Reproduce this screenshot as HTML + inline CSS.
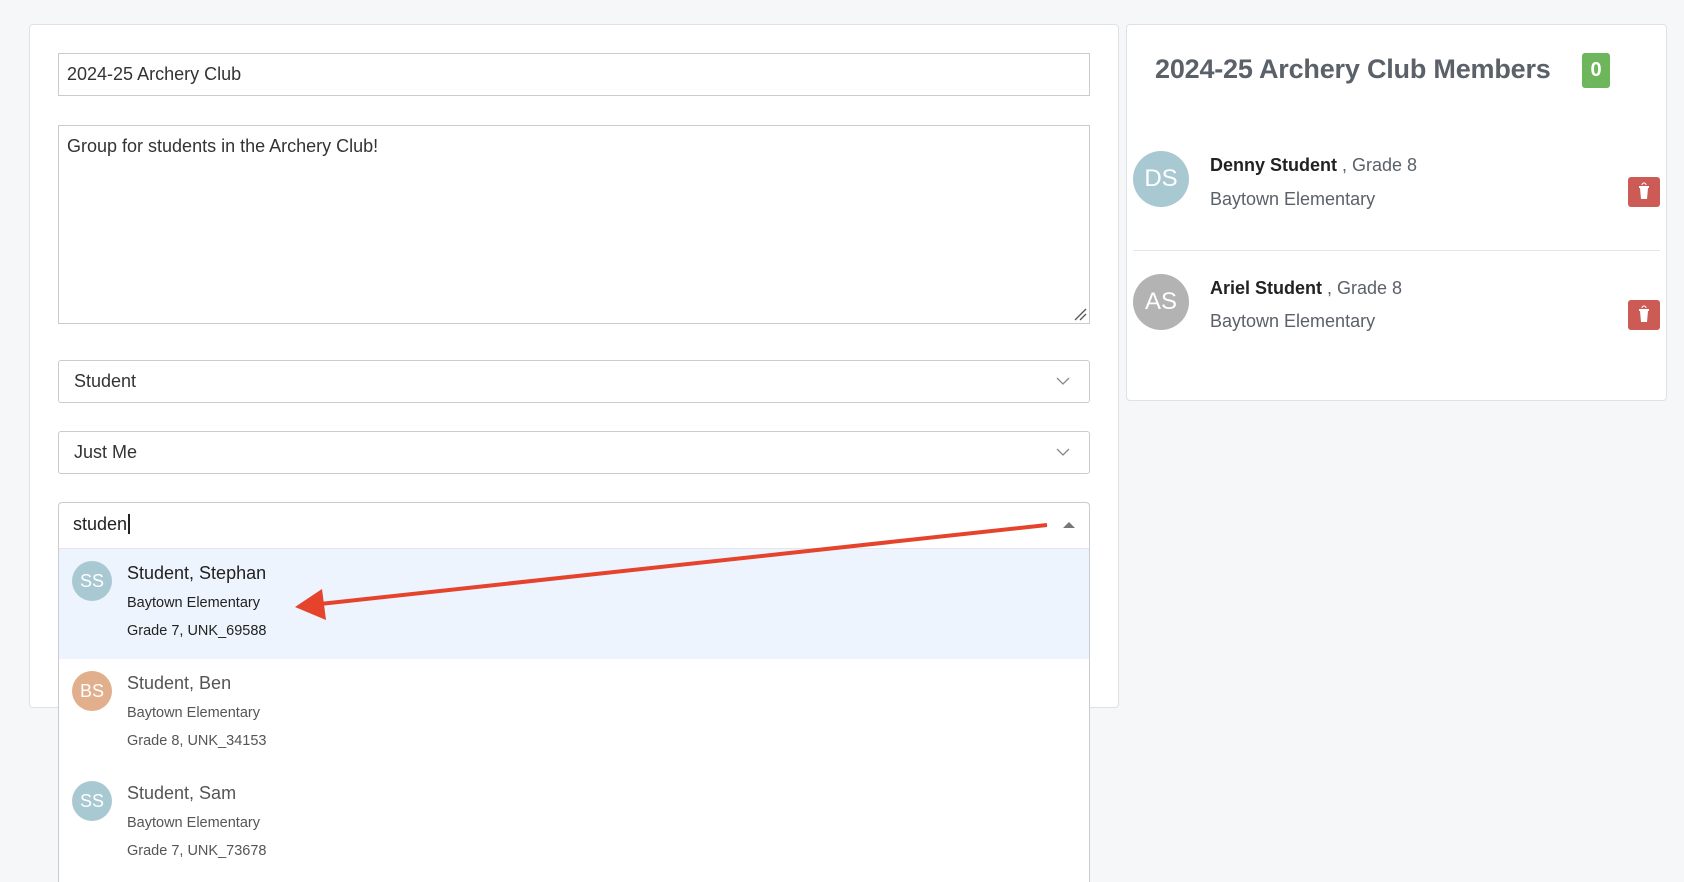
<!DOCTYPE html>
<html style="height:882px;overflow:hidden"><head><style>
body{margin:0;width:1684px;height:882px;background:#f6f7f9;font-family:"Liberation Sans",sans-serif;position:relative;overflow:hidden;color:#333}
.a{position:absolute;box-sizing:border-box}
.card{background:#fff;border:1px solid #dfe1e5;border-radius:4px}
.inp{border:1px solid #c8cbd0;background:#fff;font-size:18px;color:#333}
.av{border-radius:50%;color:#fff;display:flex;align-items:center;justify-content:center}
.chev{position:absolute;right:18px;top:12px}
</style></head><body>
<div class="a card" style="left:29px;top:24px;width:1090px;height:684px"></div>
<div class="a inp" style="left:58px;top:53px;width:1032px;height:43px;padding:10px 8px">2024-25 Archery Club</div>
<div class="a inp" style="left:58px;top:125px;width:1032px;height:199px;padding:10px 8px">Group for students in the Archery Club!
<svg style="position:absolute;right:2px;bottom:2px" width="14" height="14"><path d="M2 13L13 2M7 13L13 7" stroke="#555" stroke-width="1.3"/></svg></div>
<div class="a inp" style="left:58px;top:360px;width:1032px;height:43px;padding:10px 15px;border-radius:3px">Student<svg class="chev" width="16" height="16"><path d="M2 5l6 6 6-6" stroke="#888" fill="none" stroke-width="1.3"/></svg></div>
<div class="a inp" style="left:58px;top:431px;width:1032px;height:43px;padding:10px 15px;border-radius:3px">Just Me<svg class="chev" width="16" height="16"><path d="M2 5l6 6 6-6" stroke="#888" fill="none" stroke-width="1.3"/></svg></div>
<div class="a" style="left:58px;top:502px;width:1032px;height:380px;border:1px solid #c8cbd0;border-bottom:none;border-radius:4px 4px 0 0;background:#fff;overflow:hidden">
 <div style="height:46px;border-bottom:1px solid #e3e6ea;font-size:18px;padding:11px 14px;box-sizing:border-box;position:relative;color:#222">studen<span style="border-left:2px solid #222;margin-left:1px"></span>
 <svg style="position:absolute;right:14px;top:18px" width="12" height="8"><path d="M0 7L6 1L12 7Z" fill="#777"/></svg></div>
 <div style="height:110px;background:#edf4fd;position:relative">
  <div class="a av" style="left:13px;top:12px;width:40px;height:40px;background:#a9c9d2;font-size:18px">SS</div>
  <div class="a" style="left:68px;top:14px;font-size:18px;color:#222">Student, Stephan</div>
  <div class="a" style="left:68px;top:46px;font-size:14.5px;color:#222">Baytown Elementary</div>
  <div class="a" style="left:68px;top:74px;font-size:14.5px;color:#222">Grade 7, UNK_69588</div>
 </div>
 <div style="height:110px;position:relative">
  <div class="a av" style="left:13px;top:12px;width:40px;height:40px;background:#e1af8c;font-size:18px">BS</div>
  <div class="a" style="left:68px;top:14px;font-size:18px;color:#555">Student, Ben</div>
  <div class="a" style="left:68px;top:46px;font-size:14.5px;color:#555">Baytown Elementary</div>
  <div class="a" style="left:68px;top:74px;font-size:14.5px;color:#555">Grade 8, UNK_34153</div>
 </div>
 <div style="height:110px;position:relative">
  <div class="a av" style="left:13px;top:12px;width:40px;height:40px;background:#a9c9d2;font-size:18px">SS</div>
  <div class="a" style="left:68px;top:14px;font-size:18px;color:#555">Student, Sam</div>
  <div class="a" style="left:68px;top:46px;font-size:14.5px;color:#555">Baytown Elementary</div>
  <div class="a" style="left:68px;top:74px;font-size:14.5px;color:#555">Grade 7, UNK_73678</div>
 </div>
</div>
<svg class="a" style="left:0;top:0" width="1684" height="882"><line x1="1047" y1="525" x2="320" y2="604" stroke="#e5432b" stroke-width="4"/><path d="M295 607L322 589L326 620Z" fill="#e5432b"/></svg>
<div class="a card" style="left:1126px;top:24px;width:541px;height:377px"></div>
<div class="a" style="left:1155px;top:54px;font-size:27px;font-weight:bold;color:#5b6168;letter-spacing:-0.2px">2024-25 Archery Club Members</div>
<div class="a" style="left:1582px;top:53px;width:28px;height:35px;background:#6db65b;border-radius:3px;color:#fff;font-weight:bold;font-size:20px;text-align:center;line-height:35px">0</div>
<div class="a av" style="left:1133px;top:151px;width:56px;height:56px;background:#a9c9d2;font-size:24px">DS</div>
<div class="a" style="left:1210px;top:155px;font-size:18px"><b style="color:#222">Denny Student</b><span style="color:#5b6168"> , Grade 8</span></div>
<div class="a" style="left:1210px;top:189px;font-size:18px;color:#5b6168">Baytown Elementary</div>
<div class="a" style="left:1628px;top:177px;width:32px;height:30px;background:#cc5b55;border-radius:3px"><svg width="32" height="30"><path d="M12 11h8l-1 11h-6z" fill="#fff"/><rect x="11" y="9" width="10" height="2" fill="#fff"/><path d="M14 8a2 2 0 0 1 4 0" stroke="#fff" fill="none"/></svg></div>
<div class="a" style="left:1133px;top:250px;width:527px;height:1px;background:#e3e6ea"></div>
<div class="a av" style="left:1133px;top:274px;width:56px;height:56px;background:#b3b3b3;font-size:24px">AS</div>
<div class="a" style="left:1210px;top:278px;font-size:18px"><b style="color:#222">Ariel Student</b><span style="color:#5b6168"> , Grade 8</span></div>
<div class="a" style="left:1210px;top:311px;font-size:18px;color:#5b6168">Baytown Elementary</div>
<div class="a" style="left:1628px;top:300px;width:32px;height:30px;background:#cc5b55;border-radius:3px"><svg width="32" height="30"><path d="M12 11h8l-1 11h-6z" fill="#fff"/><rect x="11" y="9" width="10" height="2" fill="#fff"/><path d="M14 8a2 2 0 0 1 4 0" stroke="#fff" fill="none"/></svg></div>
</body></html>
